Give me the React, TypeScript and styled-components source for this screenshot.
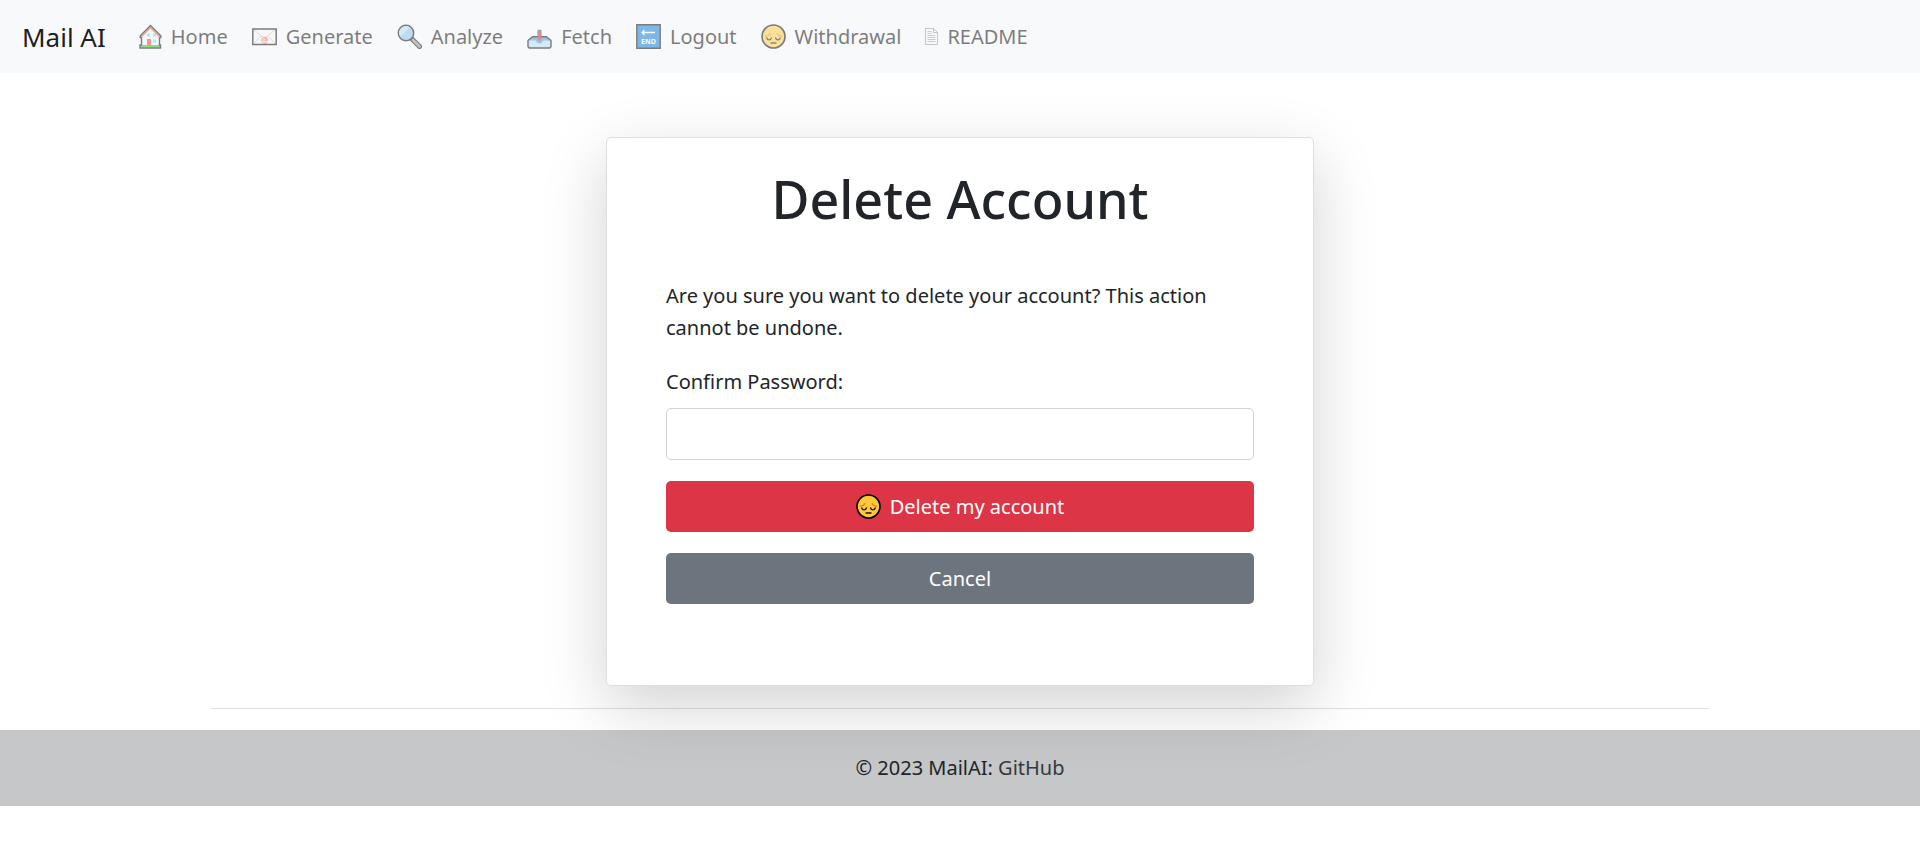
import React from "react";
import styled, { createGlobalStyle } from "styled-components";

const GlobalStyle = createGlobalStyle`
  *, *::before, *::after { box-sizing: border-box; }
  body {
    margin: 0;
    background: #fff;
    color: #212529;
    font-family: "Noto Sans", "Open Sans", sans-serif;
    font-size: 20px;
    line-height: 32px;
  }
`;

const Navbar = styled.nav`
  display: flex;
  align-items: center;
  flex-wrap: wrap;
  min-height: 73px;
  padding: 10px 22px;
  background: #f8f9fa;
`;

const Brand = styled.a`
  margin-right: 20px;
  color: rgba(0, 0, 0, 0.9);
  font-size: 26px;
  text-decoration: none;
  white-space: nowrap;
`;

const NavList = styled.ul`
  display: flex;
  flex-wrap: wrap;
  margin: 0;
  padding: 0;
  list-style: none;
`;

const NavLink = styled.a`
  display: flex;
  align-items: center;
  gap: 9px;
  padding: 10px 12px;
  color: #000;
  opacity: 0.5;
  text-decoration: none;
  white-space: nowrap;
`;

const Icon = styled.svg`
  display: block;
  flex: none;
  height: 25px;
`;

const Main = styled.main`
  padding: 64px 24px 21px;
`;

const Card = styled.section`
  max-width: 708px;
  margin: 0 auto;
  padding: 22px 59px 81px;
  background: #fff;
  border: 1px solid #dfdfdf;
  border-radius: 5px;
  box-shadow: 0 21px 64px rgba(0, 0, 0, 0.175);
`;

const Title = styled.h1`
  margin: 7px 0 49px;
  font-size: 52px;
  font-weight: 500;
  line-height: 64px;
  text-align: center;
`;

const Message = styled.p`
  margin: 0 0 22px;
`;

const Form = styled.form`
  display: flex;
  flex-direction: column;
`;

const Label = styled.label`
  margin-bottom: 10px;
`;

const PasswordInput = styled.input`
  width: 100%;
  height: 52px;
  margin-bottom: 21px;
  padding: 8px 16px;
  color: inherit;
  font: inherit;
  background: #fff;
  border: 1px solid #ced4da;
  border-radius: 5px;
`;

const Button = styled.button<{ $tone: string }>`
  display: flex;
  align-items: center;
  justify-content: center;
  gap: 9px;
  height: 51px;
  margin: 0;
  padding: 8px 16px;
  color: #fff;
  font: inherit;
  background: ${(p) => p.$tone};
  border: 0;
  border-radius: 5px;
  cursor: pointer;

  & + & { margin-top: 21px; }
`;

const Divider = styled.hr`
  max-width: 1498px;
  height: 1px;
  margin: 22px auto 0;
  border: 0;
  background: rgba(0, 0, 0, 0.12);
`;

const Footer = styled.footer`
  padding: 22px;
  background: rgba(33, 37, 41, 0.26);
  text-align: center;
`;

const FooterLink = styled.a`
  color: #343a40;
  text-decoration: none;
`;

const HouseIcon = () => (
  <Icon width="24" viewBox="0 0 24 25" aria-hidden="true">
    <path d="M4 12v11h17V12l-8.500-9z" fill="#f7f7f7" />
    <path d="M3 21h19v2.500H3z" fill="#16c60c" />
    <path d="M9 15h4v7H9z" fill="#f03a17" />
    <path d="M9 9.500h3v3H9zM15 9.500h3v3h-3zM15 15.500h3v3h-3z" fill="#50e6ff" />
    <path d="M3.500 12.500 12.500 3.500l9 9" fill="none" stroke="#f03a17" strokeWidth="1.500" />
    <path d="M3.500 21V13.500H2.200V11.800L12.500 1.500 22.800 11.800V13.500H21.500V21H22.500V24H2V21z" fill="none" stroke="#000" strokeWidth="1.400" />
  </Icon>
);

const MailIcon = () => (
  <Icon width="25" viewBox="0 0 25 25" aria-hidden="true">
    <path d="M.8 5h23.400v15.500H.8z" fill="#f7f7f7" />
    <path d="m1.500 5.500 11 9 11-9M1.500 20l7.500-8M23.500 20 16 12" fill="none" stroke="#bebebe" strokeWidth="1" />
    <path d="M15.200 18.500c-3.200 1.700-5.500.1-5.500-2.400 0-1.900 1.400-3 3-3 1.800 0 3 1 2.900 2.600-.1 1.600-1.800 1.700-1.600.4l.3-1.700m-.3 1.400c-.8 1.700-2.800 1.300-2.500-.1.300-1.400 2.300-1.600 2.700-.2" fill="none" stroke="#f03a17" strokeWidth=".9" />
    <path d="M.8 5h23.400v15.500H.8z" fill="none" stroke="#000" strokeWidth="1.500" />
  </Icon>
);

const SearchIcon = () => (
  <Icon width="25" viewBox="0 0 25 25" aria-hidden="true">
    <path d="m15 15 7.500 7.500" stroke="#000" strokeWidth="5" strokeLinecap="round" />
    <path d="m16 16 6.500 6.500" stroke="#8f8f8f" strokeWidth="2.800" strokeLinecap="round" />
    <circle cx="9" cy="9" r="7.700" fill="#83beec" stroke="#000" strokeWidth="1.500" />
    <path d="M3.300 12.500a6.700 6.700 0 0 1 9.500-9.100z" fill="#b5dcf7" />
  </Icon>
);

const InboxIcon = () => (
  <Icon width="25" viewBox="0 0 25 25" aria-hidden="true">
    <path d="M1 16 5.500 12.500h14L24 16v7l-1 1H2l-1-1z" fill="#b4dcf6" />
    <path d="M1.500 16.500 5.500 13h14l4 3.500h-7.300c-1 4-6.400 4-7.400 0z" fill="#3a96dd" />
    <path d="M1 16.500 5.500 12.800h14L24 16.500v6L22.800 24H2.200L1 22.500z" fill="none" stroke="#000" strokeWidth="1.400" strokeLinejoin="round" />
    <path d="M11.200 6.500h2.600v7h2l-3.300 4-3.300-4h2z" fill="#e81224" />
    <path d="M11 13V6.300h3V13" fill="none" stroke="#4a2020" strokeWidth="1" />
  </Icon>
);

const EndText = styled.text`
  font-family: "Open Sans", sans-serif;
  font-size: 7px;
  font-weight: 700;
`;

const EndIcon = () => (
  <Icon width="25" viewBox="0 0 25 25" aria-hidden="true">
    <path d="M.8.800h23.400v23.400H.8z" fill="#0078d7" stroke="#000" strokeWidth="1.400" />
    <path d="M6 8.500h13M8.500 6 6 8.500l2.500 2.500" fill="none" stroke="#fff" strokeWidth="1.300" />
    <EndText x="12.500" y="20" textAnchor="middle" fill="#fff">END</EndText>
  </Icon>
);

const PensiveIcon = () => (
  <Icon width="25" viewBox="0 0 25 25" aria-hidden="true">
    <circle cx="12.500" cy="12.500" r="11.500" fill="#ffc83d" stroke="#000" strokeWidth="1.700" />
    <path d="M4.500 12c2 .2 3.600-.7 4.400-2.300M20.500 12c-2 .2-3.600-.7-4.400-2.300" fill="none" stroke="#c98a16" strokeWidth="1.300" strokeLinecap="round" />
    <path d="M5.800 14c.7 2.500 3.900 2.500 4.600 0M14.600 14c.7 2.500 3.900 2.500 4.600 0M10 19h5" fill="none" stroke="#201500" strokeWidth="1.300" strokeLinecap="round" />
  </Icon>
);

const PageIcon = () => (
  <Icon width="13" viewBox="0 0 13 25" aria-hidden="true">
    <path d="M.500 4.500h8l4 4v12H.500zM8.500 4.500v4h4" fill="none" stroke="#777" strokeWidth=".8" />
    <path d="M2.500 7.500h4M2.500 9.500h4M2.500 11.500h8M2.500 13.500h8M2.500 15.500h8M2.500 17.500h8" stroke="#777" strokeWidth=".7" />
  </Icon>
);

const links = [
  { label: "Home", icon: <HouseIcon /> },
  { label: "Generate", icon: <MailIcon /> },
  { label: "Analyze", icon: <SearchIcon /> },
  { label: "Fetch", icon: <InboxIcon /> },
  { label: "Logout", icon: <EndIcon /> },
  { label: "Withdrawal", icon: <PensiveIcon /> },
  { label: "README", icon: <PageIcon /> },
];

export default function App() {
  return (
    <>
      <GlobalStyle />
      <Navbar>
        <Brand href="#">Mail AI</Brand>
        <NavList>
          {links.map(({ label, icon }) => (
            <li key={label}>
              <NavLink href="#">
                {icon}
                {label}
              </NavLink>
            </li>
          ))}
        </NavList>
      </Navbar>
      <Main>
        <Card>
          <Title>Delete Account</Title>
          <Message>
            Are you sure you want to delete your account? This action cannot be undone.
          </Message>
          <Form onSubmit={(e) => e.preventDefault()}>
            <Label htmlFor="password">Confirm Password:</Label>
            <PasswordInput id="password" type="password" />
            <Button type="submit" $tone="#dc3545">
              <PensiveIcon />
              Delete my account
            </Button>
            <Button type="button" $tone="#6c757d">Cancel</Button>
          </Form>
        </Card>
        <Divider />
      </Main>
      <Footer>
        © 2023 MailAI: <FooterLink href="#">GitHub</FooterLink>
      </Footer>
    </>
  );
}
